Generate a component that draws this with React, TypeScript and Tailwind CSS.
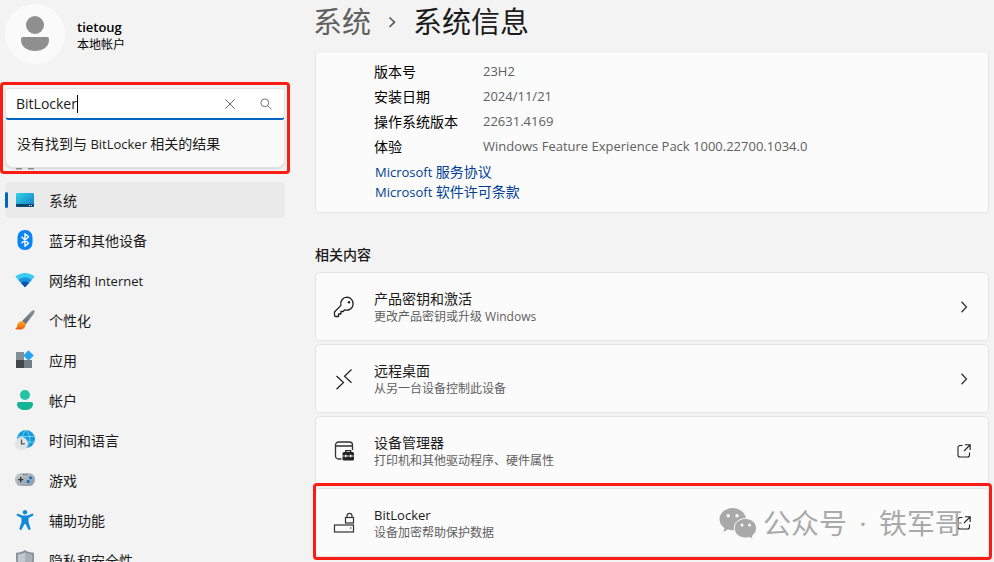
import { useState } from 'react';
import type { ReactNode } from 'react';

interface NavItem {
    label: string;
    icon: ReactNode;
    active?: boolean;
}

interface RelatedItem {
    title: string;
    description: string;
    icon: ReactNode;
    external?: boolean;
}

// Latin runs are set one size smaller so they sit evenly beside the Chinese text
function Mixed({ text }: { text: string }) {
    return (
        <>
            {text.split(/([\x20-\x7e]+)/).map((part, i) =>
                i % 2 ? <span key={i} className="text-[13px]">{part}</span> : part
            )}
        </>
    );
}

const navItems: NavItem[] = [
    { label: '系统', icon: <SystemIcon />, active: true },
    { label: '蓝牙和其他设备', icon: <BluetoothIcon /> },
    { label: '网络和 Internet', icon: <NetworkIcon /> },
    { label: '个性化', icon: <BrushIcon /> },
    { label: '应用', icon: <AppsIcon /> },
    { label: '帐户', icon: <AccountIcon /> },
    { label: '时间和语言', icon: <TimeIcon /> },
    { label: '游戏', icon: <GameIcon /> },
    { label: '辅助功能', icon: <AccessibilityIcon /> },
    { label: '隐私和安全性', icon: <ShieldIcon /> },
];

const specs = [
    ['版本号', '23H2'],
    ['安装日期', '2024/11/21'],
    ['操作系统版本', '22631.4169'],
    ['体验', 'Windows Feature Experience Pack 1000.22700.1034.0'],
];

const relatedItems: RelatedItem[] = [
    { title: '产品密钥和激活', description: '更改产品密钥或升级 Windows', icon: <KeyIcon /> },
    { title: '远程桌面', description: '从另一台设备控制此设备', icon: <RemoteIcon /> },
    { title: '设备管理器', description: '打印机和其他驱动程序、硬件属性', icon: <DeviceManagerIcon />, external: true },
];

export default function App() {
    return (
        <div className="flex h-screen overflow-hidden bg-[#f3f3f3] font-['Open_Sans','Noto_Sans_CJK_SC',sans-serif] text-sm leading-5 text-[#1a1a1a]">
            <Sidebar />
            <main className="min-w-0 flex-1 pr-[5px] pl-[25px]">
                <h1 className="-ml-0.5 flex h-[53px] items-start text-[29px] leading-[44px]">
                    <a href="#system" className="text-[#606060]">系统</a>
                    <svg viewBox="0 0 12 12" className="mx-[15px] mt-4 size-3" fill="none" stroke="#555" strokeWidth="1.6">
                        <path d="M3.5 1.5 8.5 6.2 3.5 11" />
                    </svg>
                    <span className="text-[#1b1b1b]">系统信息</span>
                </h1>

                <section className="rounded-b border border-t-0 border-[#e5e5e5] bg-[#fbfbfb] pt-[6px] pb-[10px] pl-[58px]">
                    <dl className="grid grid-cols-[109px_1fr] leading-[25px]">
                        {specs.map(([name, value]) => (
                            <div key={name} className="contents">
                                <dt className="text-black">{name}</dt>
                                <dd className="text-[13px] text-[#606060]">{value}</dd>
                            </div>
                        ))}
                    </dl>
                    <div className="flex flex-col items-start pt-[3px] pl-px leading-5 text-[#003e92]">
                        <a href="#services"><Mixed text="Microsoft 服务协议" /></a>
                        <a href="#license"><Mixed text="Microsoft 软件许可条款" /></a>
                    </div>
                </section>

                <h2 className="pt-8 pb-[7px] font-medium">相关内容</h2>
                <div className="flex flex-col gap-[3px]">
                    {relatedItems.map(item => (
                        <RelatedCard key={item.title} {...item} />
                    ))}
                    <div className="relative">
                        <RelatedCard title="BitLocker" description="设备加密帮助保护数据" icon={<DriveLockIcon />} external />
                        <div className="pointer-events-none absolute -top-[5px] -right-[3px] -bottom-[3px] -left-[2px] rounded-[4px] border-[3px] border-[#fb1d14]" />
                        <div className="pointer-events-none absolute inset-y-0 right-[26px] flex items-center text-[28px] text-[#a9a9a9]">
                            <WeChatIcon />
                            <span className="ml-[6px]">公众号</span>
                            <span className="w-8 text-center">·</span>
                            <span>铁军哥</span>
                        </div>
                    </div>
                </div>
            </main>
        </div>
    );
}

function Sidebar() {
    const [query, setQuery] = useState('BitLocker');

    return (
        <aside className="w-[290px] shrink-0">
            <div className="flex h-[82px] items-start gap-3 pt-1 pl-[5px]">
                <svg viewBox="0 0 60 60" className="size-[60px]">
                    <circle cx="30" cy="30" r="30" fill="#fafafa" />
                    <circle cx="30" cy="21" r="9" fill="#8f8f8f" />
                    <path d="M18 33h24a2 2 0 0 1 2 2v1c0 7-6.500 11-14 11s-14-4-14-11v-1a2 2 0 0 1 2-2z" fill="#8f8f8f" />
                </svg>
                <div className="pt-[14px] text-black">
                    <div className="text-[13px] leading-[18px] font-semibold">tietoug</div>
                    <div className="text-xs leading-[18px]">本地帐户</div>
                </div>
            </div>

            <div className="relative">
                <div className="absolute inset-x-0 top-0 h-[92px] rounded-[4px] border-[3px] border-[#fb1d14] px-[2px] pt-[3px]">
                    <div className="flex h-8 items-center rounded border border-b-2 border-[#e3e3e3] border-b-[#0067c0] bg-white pl-[10px]">
                        <input
                            aria-label="查找设置"
                            value={query}
                            onChange={e => setQuery(e.target.value)}
                            className="field-sizing-content text-sm outline-none"
                        />
                        <span className="h-[18px] w-px bg-black" />
                        <button aria-label="清除" onClick={() => setQuery('')} className="ml-auto p-3">
                            <svg viewBox="0 0 12 12" className="size-3" fill="none" stroke="#666">
                                <path d="m1.500 1.500 9 9m0-9-9 9" />
                            </svg>
                        </button>
                        <button aria-label="搜索" className="p-3">
                            <svg viewBox="0 0 12 12" className="size-3" fill="none" stroke="#777">
                                <circle cx="4.800" cy="4.800" r="3.900" />
                                <path d="m7.700 7.700 3.800 3.600" />
                            </svg>
                        </button>
                    </div>
                    <div className="h-12 rounded-b-lg border border-t-0 border-[#e3e3e3] bg-[#f9f9f9] pt-[14px] pl-[11px] shadow-sm">
                        <Mixed text="没有找到与 BitLocker 相关的结果" />
                    </div>
                </div>

                <nav className="flex flex-col gap-1 px-[5px] pt-[60px]">
                    <button aria-label="主页" className="flex h-9 items-center pl-[10px]">
                        <HomeIcon />
                    </button>
                    {navItems.map(item => (
                        <button
                            key={item.label}
                            className={`flex h-9 shrink-0 items-center rounded text-left ${item.active ? 'bg-[#eaeaea]' : ''}`}
                        >
                            <span className={`h-4 w-[3px] rounded-full ${item.active ? 'bg-[#0067c0]' : ''}`} />
                            <span className="ml-[7px] size-5">{item.icon}</span>
                            <span className="ml-[14px] pt-0.5"><Mixed text={item.label} /></span>
                        </button>
                    ))}
                </nav>
            </div>
        </aside>
    );
}

function RelatedCard({ title, description, icon, external }: RelatedItem) {
    return (
        <button className="flex h-[69px] w-full items-center rounded border border-[#e5e5e5] bg-[#fbfbfb] pr-4 pl-[17px] text-left">
            <span className="size-[22px]">{icon}</span>
            <span className="ml-[19px] flex-1 pt-0.5">
                <span className="block leading-[18px]"><Mixed text={title} /></span>
                <span className="block text-xs leading-[17px] text-[#606060]">{description}</span>
            </span>
            {external ? (
                <svg viewBox="0 0 16 16" className="size-4" fill="none" stroke="#222" strokeWidth="1.100">
                    <path d="M6.500 2.500H4A2 2 0 0 0 2 4.500V12a2 2 0 0 0 2 2h7.500a2 2 0 0 0 2-2V9.500M9 1.800h5.200V7M14 2 8 8" />
                </svg>
            ) : (
                <svg viewBox="0 0 16 16" className="size-4" fill="none" stroke="#333" strokeWidth="1.300">
                    <path d="m5.500 2.800 5 5.200-5 5.200" />
                </svg>
            )}
        </button>
    );
}

function HomeIcon() {
    return (
        <svg viewBox="0 0 20 20" className="size-5" fill="#9a9a9a">
            <path d="M10 1 1 9v10.500h6v-6h6v6h6V9z" />
        </svg>
    );
}

function SystemIcon() {
    return (
        <svg viewBox="0 0 20 20" className="size-5">
            <defs>
                <linearGradient id="screen" x1="0" y1="0" x2="1" y2="1">
                    <stop stopColor="#35d3e6" />
                    <stop offset="1" stopColor="#0d7cc4" />
                </linearGradient>
            </defs>
            <rect x="1" y="3" width="18" height="14" rx="1.200" fill="url(#screen)" />
            <path d="M1 14h18v1.800a1.200 1.200 0 0 1-1.200 1.200H2.200A1.200 1.200 0 0 1 1 15.800z" fill="#0c4668" />
            <path d="M14 15.500h1m1 0h1" stroke="#fff" />
        </svg>
    );
}

function BluetoothIcon() {
    return (
        <svg viewBox="0 0 20 20" className="size-5">
            <rect x="2.500" y="0" width="15" height="20" rx="7" fill="#0a84f5" />
            <path d="m6.500 6.800 7 6.400-3.500 3V3.800l3.500 3-7 6.400" fill="none" stroke="#fff" strokeWidth="1.400" strokeLinejoin="round" />
        </svg>
    );
}

function NetworkIcon() {
    return (
        <svg viewBox="0 0 20 20" className="size-5">
            <path d="M.3 6.600C5.500 1.800 14.500 1.800 19.700 6.600L10 17.300z" fill="#39cdf5" />
            <path d="M3.300 10c3.800-3.600 9.600-3.600 13.400 0L10 17.300z" fill="#1a94e0" />
            <path d="M6.100 13c2.200-2 5.600-2 7.800 0L10 17.300z" fill="#0b55a8" />
        </svg>
    );
}

function BrushIcon() {
    return (
        <svg viewBox="0 0 20 20" className="size-5">
            <defs>
                <linearGradient id="handle" x1="1" y1="0" x2="0" y2="1">
                    <stop stopColor="#8b949e" />
                    <stop offset="1" stopColor="#626a73" />
                </linearGradient>
                <linearGradient id="bristle" x1="0" y1="0" x2="0" y2="1">
                    <stop stopColor="#ffae2b" />
                    <stop offset="1" stopColor="#e8590c" />
                </linearGradient>
            </defs>
            <path d="M19.200.6c.8.800.5 1.800-.2 2.800l-8.400 11.200-3.700-3.400L16.700 1c.9-.8 1.800-1 2.500-.4z" fill="url(#handle)" />
            <path d="M6.700 11.200c2.300.2 3.800 1.700 3.800 3.700-.4 3.200-3 4.700-6.300 4.700-1.700 0-3-.3-4.200-1.200 2.300-.5 2-2 2.400-4 .5-2 2.300-3.300 4.300-3.200z" fill="url(#bristle)" />
        </svg>
    );
}

function AppsIcon() {
    return (
        <svg viewBox="0 0 20 20" className="size-5">
            <path d="M1 2h8v8H1z" fill="#858d96" />
            <path d="M1 10h8v8H1z" fill="#42474d" />
            <path d="M9 10h8v8H9z" fill="#747c85" />
            <path d="m13.500.2 5.300 5.300-5.300 5.300-5.300-5.300z" fill="#25a4ee" />
        </svg>
    );
}

function AccountIcon() {
    return (
        <svg viewBox="0 0 20 20" className="size-5">
            <circle cx="10" cy="5" r="5" fill="#25c3a6" />
            <path d="M4 12h12a2 2 0 0 1 2 2c0 4-3.500 6-8 6s-8-2-8-6a2 2 0 0 1 2-2z" fill="#17b397" />
        </svg>
    );
}

function TimeIcon() {
    return (
        <svg viewBox="0 0 20 20" className="size-5" fill="none">
            <circle cx="11" cy="9" r="9" fill="#1598dc" />
            <path d="M2.500 6.500h17M2.500 12h17M11 0c-5 5-5 13 0 18M11 0c5 5 5 13 0 18" stroke="#7bd6f3" strokeWidth=".9" />
            <circle cx="6.500" cy="13.500" r="6.500" fill="#e3e3e5" />
            <path d="M6.500 9.500v4.300h3.300" stroke="#50545a" strokeWidth="1.300" />
        </svg>
    );
}

function GameIcon() {
    return (
        <svg viewBox="0 0 20 20" className="size-5">
            <defs>
                <linearGradient id="pad" x1="0" y1="0" x2="1" y2="1">
                    <stop stopColor="#c5cbd1" />
                    <stop offset="1" stopColor="#8f979f" />
                </linearGradient>
            </defs>
            <rect y="3" width="20" height="13" rx="6.300" fill="url(#pad)" />
            <path d="M5.700 7v5.200M3.100 9.600h5.200" stroke="#33373c" strokeWidth="1.400" />
            <path d="M8.300 4.700h1m1.400 0h1" stroke="#33373c" />
            <circle cx="15.500" cy="7.800" r="1.500" fill="#0a6bd0" />
            <circle cx="13.200" cy="11.600" r="1.500" fill="#0a6bd0" />
        </svg>
    );
}

function AccessibilityIcon() {
    return (
        <svg viewBox="0 0 20 20" className="size-5" fill="#1089dd">
            <circle cx="10" cy="2.200" r="2.200" />
            <path d="M3 3.700 7.500 5.500h5L17 3.700c1.400-.4 2 1.500.8 2.100L13.500 8v4l2 6.500c.3 1.400-1.700 2-2.300.7L10.500 14h-1l-2.700 5.200c-.6 1.300-2.600.7-2.300-.7l2-6.500V8L2.200 5.800C1 5.200 1.600 3.300 3 3.700z" />
        </svg>
    );
}

function ShieldIcon() {
    return (
        <svg viewBox="0 0 20 20" className="size-5">
            <path d="M10 0c2.600 1.900 5.500 2.600 9 2.700V10c0 5-4 8.300-9 10-5-1.700-9-5-9-10V2.700C4.500 2.600 7.400 1.900 10 0z" fill="#8a9199" />
            <path d="M10 2.200c2.200 1.400 4.500 2 7.200 2.200V10c0 4-3.200 6.600-7.200 8.100z" fill="#a9b0b7" />
            <path d="M10 2.200C7.800 3.600 5.500 4.200 2.800 4.400V10c0 4 3.200 6.600 7.200 8.100z" fill="#c3c9ce" />
        </svg>
    );
}

function KeyIcon() {
    return (
        <svg viewBox="0 0 22 22" className="size-[22px]" fill="none" stroke="#1f1f1f" strokeWidth="1.300" strokeLinejoin="round">
            <path d="M14.200 1.200a6.500 6.500 0 0 0-6.300 8.200L1.500 16v3.200a1.300 1.300 0 0 0 1.300 1.300H5.500V18h2.400v-2.500h2.300l1.300-1.700a6.500 6.500 0 1 0 2.700-12.600z" />
            <circle cx="16" cy="6.200" r="1.200" fill="#1f1f1f" stroke="none" />
        </svg>
    );
}

function RemoteIcon() {
    return (
        <svg viewBox="0 0 22 22" className="size-[22px]" fill="none" stroke="#1f1f1f" strokeWidth="1.200">
            <path d="m3.500 8 7 6.500-7 6.700M18.500 1.500l-7 6.700 7 6.500" />
        </svg>
    );
}

function DeviceManagerIcon() {
    return (
        <svg viewBox="0 0 22 22" className="size-[22px]" fill="none" stroke="#333" strokeWidth="1.300">
            <path d="M8.500 19H5.500A3 3 0 0 1 2.500 16V5a3 3 0 0 1 3-3h11a3 3 0 0 1 3 3v5M2.500 6h17" />
            <rect x="9.500" y="12" width="11.500" height="8.500" rx="1.500" fill="#222" stroke="none" />
            <path d="M12.700 12v-1.300h5V12" stroke="#222" />
            <path d="M9.500 16h11.500" stroke="#fbfbfb" strokeWidth=".8" />
            <path d="M12.800 14.800v2.400m4.900-2.400v2.400" stroke="#fbfbfb" />
        </svg>
    );
}

function DriveLockIcon() {
    return (
        <svg viewBox="0 0 22 22" className="size-[22px]" fill="none" stroke="#333" strokeWidth="1.200">
            <rect x="1.500" y="13" width="19" height="7" />
            <path d="M17 16h1.500" />
            <rect x="12.500" y="5.500" width="8" height="5.500" />
            <path d="M14 5.500V3.800a2.500 2.500 0 0 1 5 0v1.700" />
        </svg>
    );
}

function WeChatIcon() {
    return (
        <svg viewBox="0 0 38 32" className="h-8 w-[38px]" fill="#a9a9a9">
            <path d="M13.500 1C6.300 1 .5 6 .5 12.300c0 3.600 1.900 6.700 5 8.700l-1.300 4 4.700-2.400c1.500.5 3 .7 4.600.7C20.700 23.300 27 18.600 27 12.300 27 6 20.700 1 13.500 1z" />
            <path d="M26.500 11.500c-6.300 0-11.200 4.200-11.200 9.700S20.200 31 26.500 31c1.300 0 2.600-.2 3.800-.6l4 2-1-3.400c2.600-1.800 4.200-4.500 4.200-7.800 0-5.500-5-9.700-11-9.700z" stroke="#fbfbfb" />
            <g fill="#fbfbfb">
                <circle cx="9.200" cy="8.800" r="1.700" />
                <circle cx="18" cy="8.800" r="1.700" />
                <circle cx="23" cy="18" r="1.500" />
                <circle cx="30.500" cy="18" r="1.500" />
            </g>
        </svg>
    );
}
